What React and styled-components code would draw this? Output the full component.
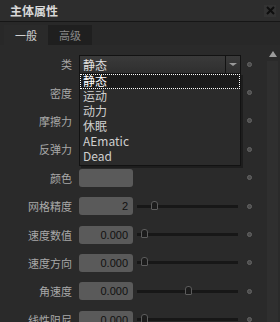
import styled, { createGlobalStyle } from "styled-components";

const GlobalStyle = createGlobalStyle`
  html, body {
    margin: 0;
    padding: 0;
    background: #2a2a2a;
  }
  body {
    font-family: "Noto Sans CJK SC", "Noto Sans", sans-serif;
  }
`;

const Panel = styled.div`
  width: 280px;
  height: 322px;
  overflow: hidden;
  background: #2a2a2a;
  display: flex;
  flex-direction: column;
`;

const TitleBar = styled.div`
  height: 21px;
  flex-shrink: 0;
  display: flex;
  align-items: center;
  justify-content: space-between;
  padding: 0 4px 0 10px;
  background: #2d2d2d;
  border-bottom: 1px solid #161616;
`;

const Title = styled.span`
  font-size: 12px;
  font-weight: 700;
  color: #d8d8d8;
`;

const Close = styled.span`
  width: 12px;
  height: 12px;
  display: flex;
  align-items: center;
  justify-content: center;
  background: #333;
`;

const TabBar = styled.div`
  height: 23px;
  flex-shrink: 0;
  display: flex;
  align-items: flex-end;
  padding-left: 4px;
  background: #282828;
`;

const Tab = styled.div`
  width: 44px;
  height: 20px;
  display: flex;
  align-items: center;
  justify-content: center;
  font-size: 11px;
  color: ${(p) => (p.$active ? "#d0d0d0" : "#8a8a8a")};
  background: ${(p) => (p.$active ? "#2a2a2a" : "#1f1f1f")};
`;

const Body = styled.div`
  flex: 1;
  display: flex;
  min-height: 0;
`;

const Content = styled.div`
  width: 265px;
  padding-top: 5px;
  display: flex;
  flex-direction: column;
`;

const Row = styled.div`
  height: 28.4px;
  flex-shrink: 0;
  display: flex;
  align-items: center;
  position: relative;
`;

const Label = styled.span`
  width: 72px;
  flex-shrink: 0;
  text-align: right;
  font-size: 11px;
  color: #a8a8a8;
  margin-right: 7px;
`;

const Field = styled.div`
  width: 54px;
  height: 18px;
  flex-shrink: 0;
  box-sizing: border-box;
  border-radius: 3px;
  background: #5a5a5a;
  display: flex;
  align-items: center;
  justify-content: flex-end;
  padding-right: 5px;
  font-family: "Liberation Sans", "Noto Sans", sans-serif;
  font-size: 11px;
  color: #111;
`;

const Slider = styled.div`
  width: 101px;
  height: 3px;
  margin-left: 4px;
  background: #171717;
  position: relative;
`;

const Thumb = styled.span`
  position: absolute;
  top: -4px;
  width: 7px;
  height: 9px;
  box-sizing: border-box;
  border: 1px solid #5c5c5c;
  border-radius: 3px 3px 1px 1px;
  background: #1c1c1c;
`;

const Spacer = styled.div`
  flex: 1;
`;

const Dot = styled.span`
  width: 5px;
  height: 5px;
  box-sizing: border-box;
  border-radius: 50%;
  background: #4c4c4c;
  border: 1px solid #666;
  margin-right: 13px;
`;

const Select = styled.div`
  width: 162px;
  height: 19px;
  box-sizing: border-box;
  border: 1px solid #121212;
  background: linear-gradient(#3a3a3a, #2f2f2f);
  display: flex;
  align-items: center;
  position: relative;
`;

const SelectValue = styled.span`
  flex: 1;
  padding-left: 3px;
  font-size: 12px;
  color: #e0e0e0;
`;

const SelectButton = styled.span`
  width: 14px;
  height: 100%;
  border-left: 1px solid #121212;
  display: flex;
  align-items: center;
  justify-content: center;
`;

const Caret = styled.span`
  width: 0;
  height: 0;
  border-left: 4px solid transparent;
  border-right: 4px solid transparent;
  border-top: 3px solid #9a9a9a;
`;

const List = styled.div`
  position: absolute;
  top: 17px;
  left: -1px;
  width: 162px;
  box-sizing: border-box;
  border: 1px solid #121212;
  background: #2b2b2b;
  box-shadow: 2px 2px 0 #1d1d1d;
  z-index: 5;
  padding-bottom: 1px;
`;

const Option = styled.div`
  height: 15px;
  line-height: 14px;
  padding-left: 3px;
  font-size: 12px;
  color: ${(p) => (p.$selected ? "#fff" : "#cfcfcf")};
  background: ${(p) => (p.$selected ? "#1b1b1b" : "transparent")};
  outline: ${(p) => (p.$selected ? "1px dotted #fff" : "none")};
  outline-offset: -1px;
`;

const ScrollBar = styled.div`
  width: 15px;
  display: flex;
  flex-direction: column;
  align-items: center;
`;

const UpArrow = styled.span`
  margin-top: 6px;
  width: 0;
  height: 0;
  border-left: 4px solid transparent;
  border-right: 4px solid transparent;
  border-bottom: 6px solid #9c9c9c;
`;

const Track = styled.div`
  margin-top: 4px;
  width: 11px;
  flex: 1;
  background: #2f2f2f;
`;

const options = ["静态", "运动", "动力", "休眠", "AEmatic", "Dead"];

const rows = [
  { label: "密度" },
  { label: "摩擦力" },
  { label: "反弹力" },
  { label: "颜色", color: true },
  { label: "网格精度", value: "2", thumb: 14 },
  { label: "速度数值", value: "0.000", thumb: 4 },
  { label: "速度方向", value: "0.000", thumb: 4 },
  { label: "角速度", value: "0.000", thumb: 48 },
  { label: "线性阻尼", value: "0.000", thumb: 4 },
];

function CloseIcon() {
  return (
    <svg width="9" height="9" viewBox="0 0 9 9">
      <path d="M1 1 L8 8 M8 1 L1 8" stroke="#0e0e0e" strokeWidth="2" />
    </svg>
  );
}

export default function App() {
  return (
    <>
      <GlobalStyle />
      <Panel>
        <TitleBar>
          <Title>主体属性</Title>
          <Close>
            <CloseIcon />
          </Close>
        </TitleBar>
        <TabBar>
          <Tab $active>一般</Tab>
          <Tab>高级</Tab>
        </TabBar>
        <Body>
          <Content>
            <Row>
              <Label>类</Label>
              <Select>
                <SelectValue>静态</SelectValue>
                <SelectButton>
                  <Caret />
                </SelectButton>
                <List>
                  {options.map((o, i) => (
                    <Option key={o} $selected={i === 0}>
                      {o}
                    </Option>
                  ))}
                </List>
              </Select>
              <Spacer />
              <Dot />
            </Row>
            {rows.map((r) => (
              <Row key={r.label}>
                <Label>{r.label}</Label>
                <Field>{r.value}</Field>
                {r.thumb !== undefined && (
                  <Slider>
                    <Thumb style={{ left: r.thumb }} />
                  </Slider>
                )}
                <Spacer />
                <Dot />
              </Row>
            ))}
          </Content>
          <ScrollBar>
            <UpArrow />
            <Track />
          </ScrollBar>
        </Body>
      </Panel>
    </>
  );
}
